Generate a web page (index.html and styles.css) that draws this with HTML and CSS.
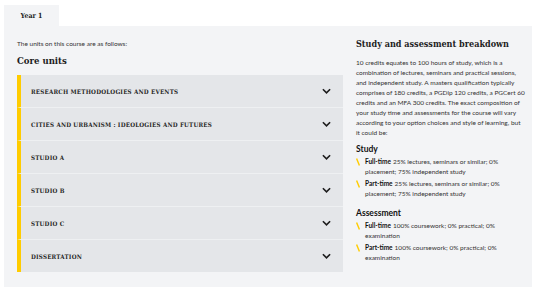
FILE: index.html
```html
<!DOCTYPE html>
<html lang="en">
<head>
<meta charset="utf-8">
<title>Course units</title>
<link rel="stylesheet" href="styles.css">
</head>
<body>
<div class="page">
  <div class="tabs">
    <div class="tab">Year 1</div>
  </div>
  <div class="panel">
    <div class="units">
      <p class="intro">The units on this course are as follows:</p>
      <h2 class="core-heading">Core units</h2>
      <div class="accordion">
        <div class="acc-item"><span class="acc-title">Research Methodologies and Events</span><svg class="chev" viewBox="0 0 10 6"><path d="M1 1l4 4 4-4"/></svg></div>
        <div class="acc-item"><span class="acc-title">Cities and Urbanism : Ideologies and Futures</span><svg class="chev" viewBox="0 0 10 6"><path d="M1 1l4 4 4-4"/></svg></div>
        <div class="acc-item"><span class="acc-title">Studio A</span><svg class="chev" viewBox="0 0 10 6"><path d="M1 1l4 4 4-4"/></svg></div>
        <div class="acc-item"><span class="acc-title">Studio B</span><svg class="chev" viewBox="0 0 10 6"><path d="M1 1l4 4 4-4"/></svg></div>
        <div class="acc-item"><span class="acc-title">Studio C</span><svg class="chev" viewBox="0 0 10 6"><path d="M1 1l4 4 4-4"/></svg></div>
        <div class="acc-item"><span class="acc-title">Dissertation</span><svg class="chev" viewBox="0 0 10 6"><path d="M1 1l4 4 4-4"/></svg></div>
      </div>
    </div>
    <div class="breakdown">
      <h2 class="bd-heading">Study and assessment breakdown</h2>
      <p class="bd-text">10 credits equates to 100 hours of study, which is a<br>combination of lectures, seminars and practical sessions,<br>and independent study. A masters qualification typically<br>comprises of 180 credits, a PGDip 120 credits, a PGCert 60<br>credits and an MFA 300 credits. The exact composition of<br>your study time and assessments for the course will vary<br>according to your option choices and style of learning, but<br>it could be:</p>
      <h3 class="sub-heading">Study</h3>
      <ul class="mode-list">
        <li class="mode"><svg class="slash" viewBox="0 0 4 8"><path d="M0.6 0.5l2.8 7"/></svg><p class="mode-text"><b class="mode-label">Full-time</b>25% lectures, seminars or similar; 0% placement; 75% independent study</p></li>
        <li class="mode"><svg class="slash" viewBox="0 0 4 8"><path d="M0.6 0.5l2.8 7"/></svg><p class="mode-text"><b class="mode-label">Part-time</b>25% lectures, seminars or similar; 0% placement; 75% independent study</p></li>
      </ul>
      <h3 class="sub-heading sub-heading--spaced">Assessment</h3>
      <ul class="mode-list">
        <li class="mode"><svg class="slash" viewBox="0 0 4 8"><path d="M0.6 0.5l2.8 7"/></svg><p class="mode-text"><b class="mode-label">Full-time</b>100% coursework; 0% practical; 0% examination</p></li>
        <li class="mode"><svg class="slash" viewBox="0 0 4 8"><path d="M0.6 0.5l2.8 7"/></svg><p class="mode-text"><b class="mode-label">Part-time</b>100% coursework; 0% practical; 0% examination</p></li>
      </ul>
    </div>
  </div>
</div>
</body>
</html>
```

FILE: styles.css
```css
* { box-sizing: border-box; }
html, body { margin: 0; padding: 0; background: #ffffff; }
body { font-family: Lato, "Noto Sans", sans-serif; color: #333; }

.page { padding: 5px 0 0 4px; width: 532px; }

.tabs { display: flex; }
.tab {
  width: 55px; height: 21px;
  background: #f3f4f6;
  display: flex; align-items: center; justify-content: center;
  font-family: "DejaVu Serif Condensed", "DejaVu Serif", serif; font-weight: bold; font-size: 7px;
  color: #1d1d1d;
}

.panel {
  background: #f3f4f6;
  padding: 13px 12px 15px 13px;
  display: grid;
  grid-template-columns: 326px 1fr;
  column-gap: 13px;
  align-items: start;
}

.intro { margin: 0; font-size: 6.5px; line-height: 10px; color: #333; }
.core-heading {
  margin: 5px 0 0; font-family: "DejaVu Serif Condensed", "DejaVu Serif", serif; font-weight: bold;
  font-size: 9.5px; line-height: 14px; color: #1d1d1d;
}

.accordion { margin-top: 7px; display: flex; flex-direction: column; }
.acc-item {
  height: 33px;
  background: #e4e6e9;
  border-left: 4px solid #ffcc00;
  border-bottom: 1px solid #eef0f2;
  display: flex; align-items: center; justify-content: space-between;
  padding: 0 12px 0 10px;
}
.acc-item:last-child { border-bottom: 0; height: 32px; }
.acc-title {
  font-family: "DejaVu Serif Condensed", "DejaVu Serif", serif; font-weight: bold; font-size: 6.2px;
  text-transform: uppercase; letter-spacing: 0.2px; color: #262626;
}
.chev { width: 9px; height: 6px; fill: none; stroke: #1d1d1d; stroke-width: 1.8; }

.breakdown { width: 170px; }
.bd-heading {
  margin: 0; font-family: "DejaVu Serif Condensed", "DejaVu Serif", serif; font-weight: bold;
  font-size: 9px; line-height: 10px; color: #1d1d1d; white-space: nowrap;
}
.bd-text { margin: 9px 0 0; font-size: 6.5px; line-height: 10px; color: #333; white-space: nowrap; }
.sub-heading {
  margin: 5px 0 0; font-size: 8.5px; line-height: 12px; font-weight: 700; color: #111;
}
.sub-heading--spaced { margin-top: 8px; }
.mode-list { list-style: none; margin: 2px 0 0; padding: 0; display: flex; flex-direction: column; gap: 2px; width: 150px; }
.mode { display: flex; align-items: flex-start; }
.slash { flex: none; width: 4px; height: 8px; margin: 1px 5px 0 0; fill: none; stroke: #ffcc00; stroke-width: 1.4; }
.mode-text { margin: 0; font-size: 6.5px; line-height: 10px; color: #333; }
.mode-label { color: #111; font-weight: 700; margin-right: 2px; }
```
